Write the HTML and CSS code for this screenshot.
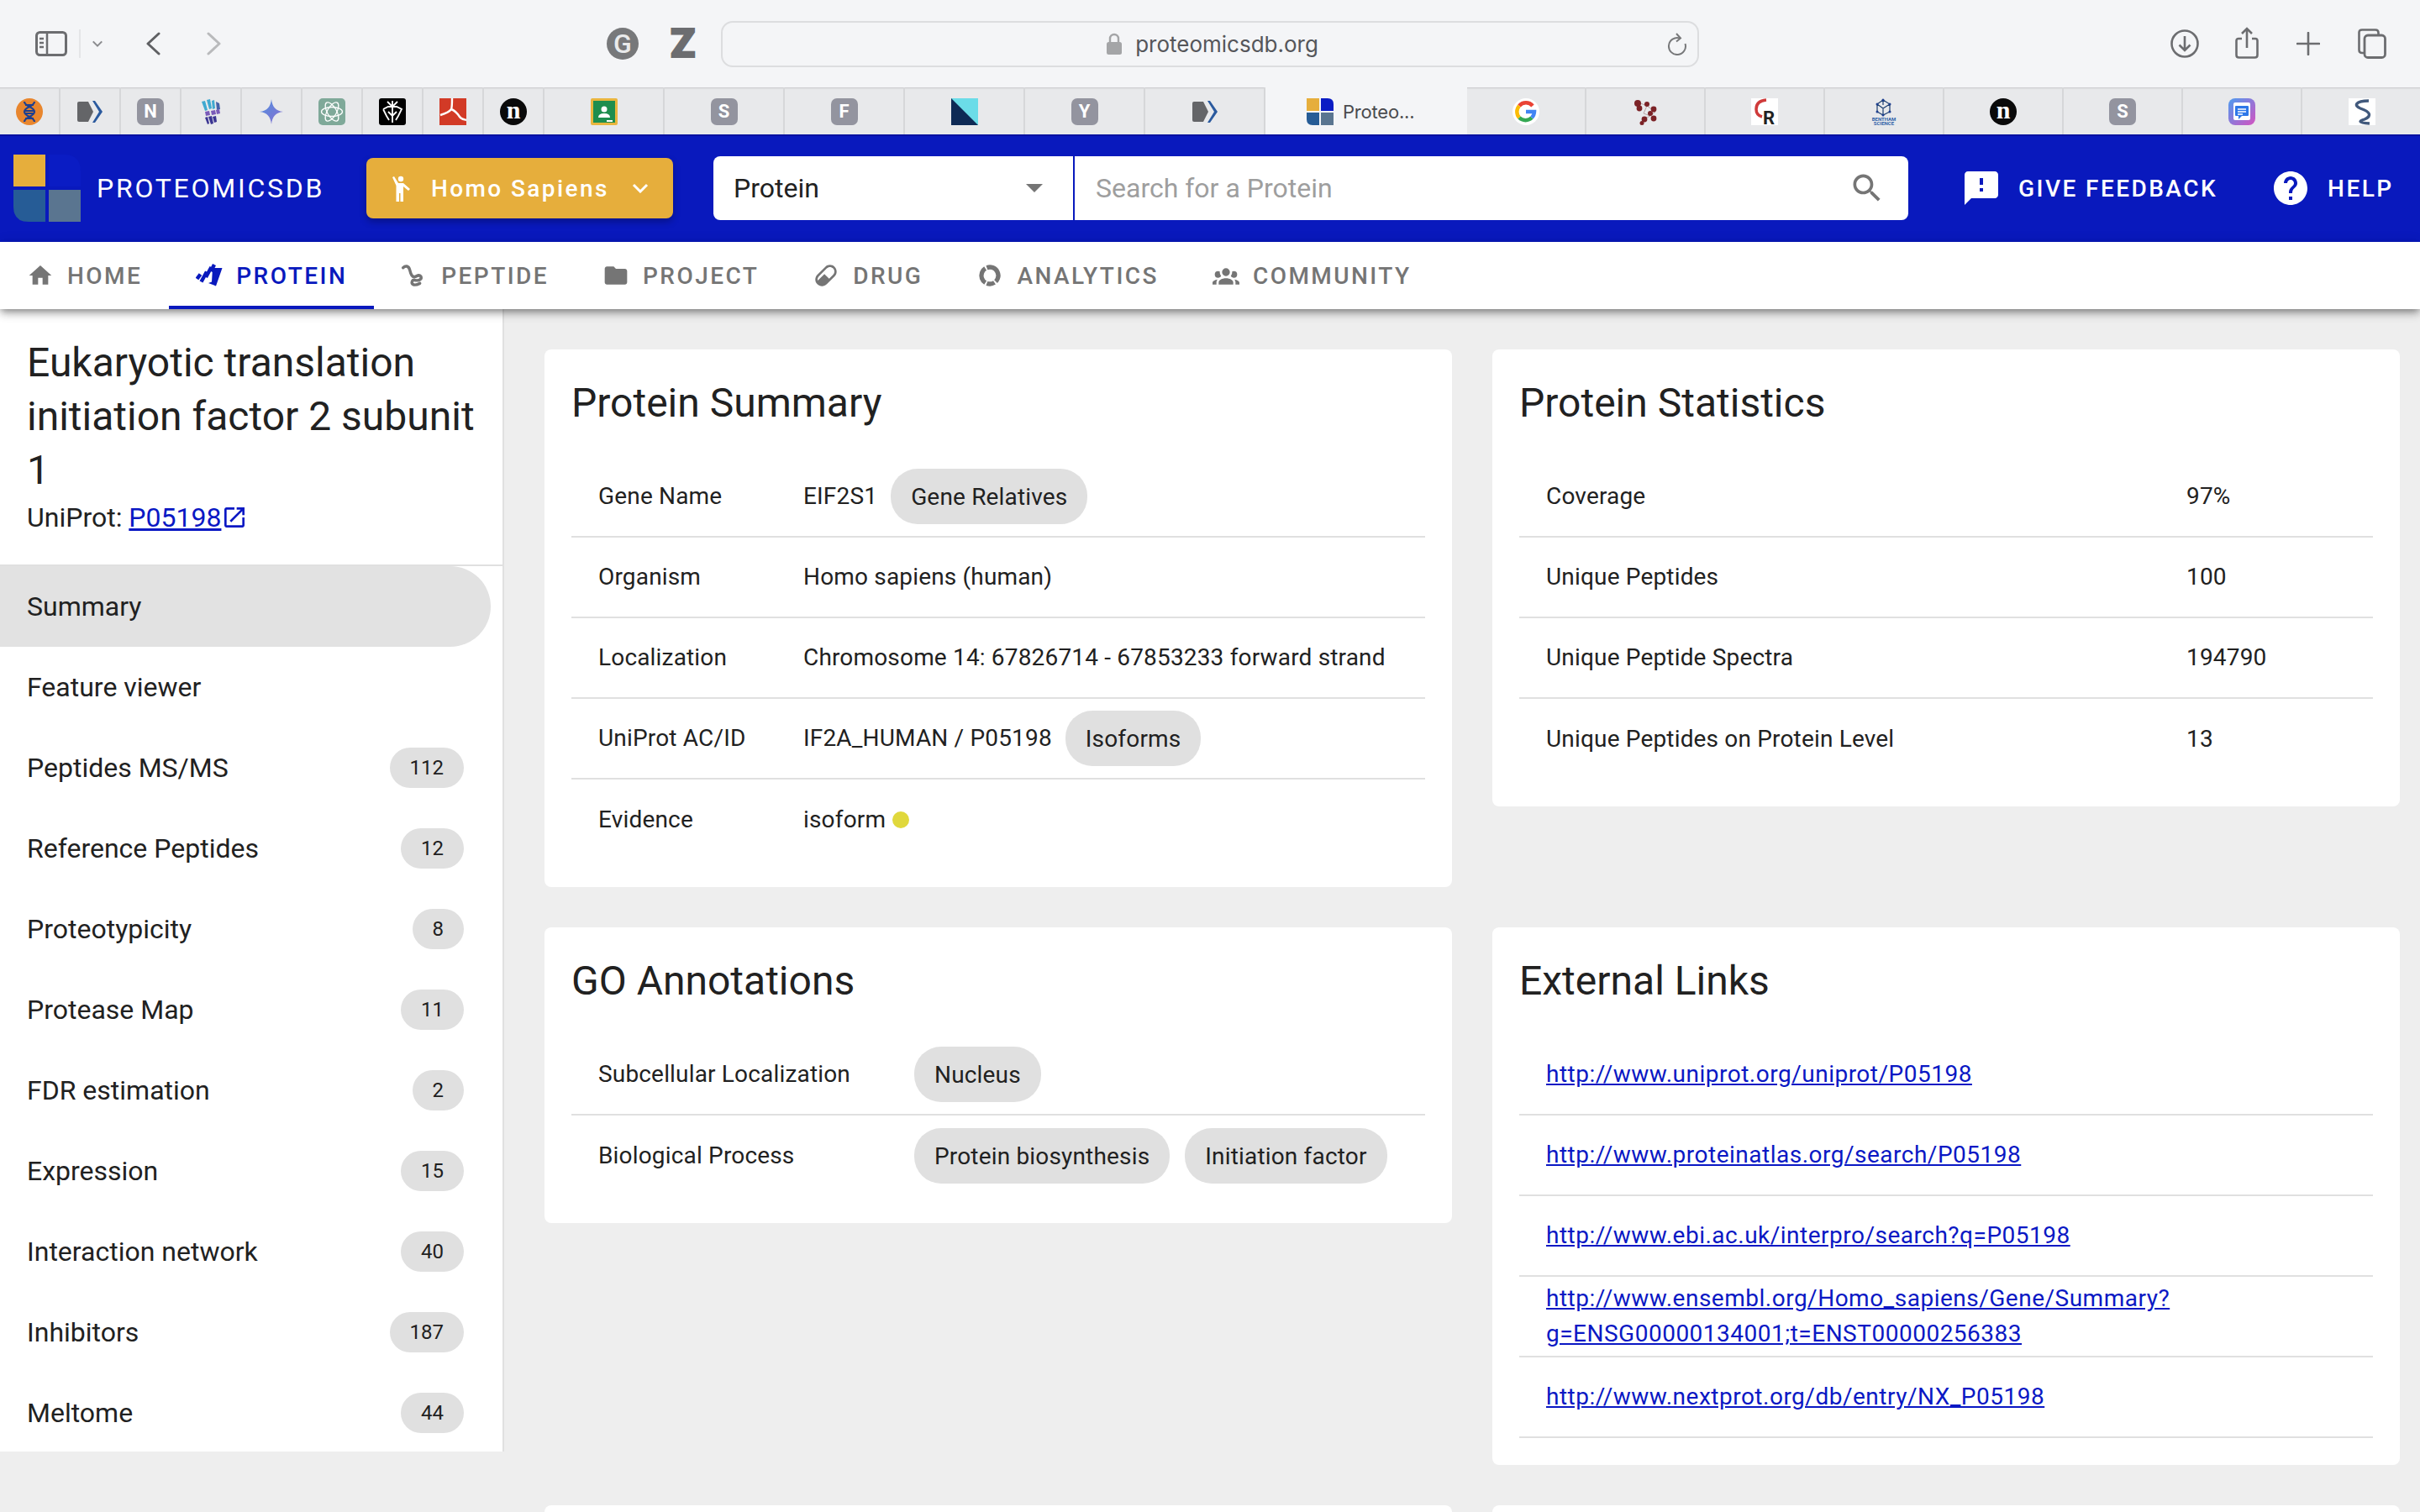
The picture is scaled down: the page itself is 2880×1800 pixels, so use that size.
FILE: index.html
```html
<!DOCTYPE html>
<html lang="en">
<head>
<meta charset="utf-8">
<title>ProteomicsDB</title>
<link rel="stylesheet" href="styles.css">
</head>
<body>
<svg class="defs" width="0" height="0">
  <symbol id="fav-arrow" viewBox="0 0 32 32"><path d="M1 6q0-2 2-2h11l6 12-6 12H3q-2 0-2-2z" fill="#646568"/><path d="M19 3h3l9 13-9 13h-3l8-13z" fill="#2b5a9e"/></symbol>
  <symbol id="logo-mark" viewBox="0 0 80 80"><rect width="38" height="38" fill="#e6ae3c"/><path d="M42 0h18q20 0 20 20v18H42z" fill="#0a1cc4"/><path d="M0 42h38v38H18Q0 80 0 62z" fill="#265c96"/><rect x="42" y="42" width="38" height="38" fill="#5a7590"/></symbol>
</svg>

<div class="toolbar">
  <svg class="tb-sidebar" viewBox="0 0 38 30"><rect x="1.500" y="1.500" width="35" height="27" rx="4" fill="none" stroke="#6c6d70" stroke-width="3"/><path d="M14 2v26" stroke="#6c6d70" stroke-width="2.500"/><path d="M5 9h5M5 14h5M5 19h5" stroke="#6c6d70" stroke-width="2.500"/></svg>
  <span class="tb-sep"></span>
  <svg class="tb-chev" viewBox="0 0 16 10"><path d="M2 2l6 6 6-6" fill="none" stroke="#8a8b8e" stroke-width="2.400"/></svg>
  <svg class="tb-back" viewBox="0 0 18 28"><path d="M16 2L3 14l13 12" fill="none" stroke="#5f6063" stroke-width="3" stroke-linecap="round" stroke-linejoin="round"/></svg>
  <svg class="tb-fwd" viewBox="0 0 18 28"><path d="M2 2l13 12L2 26" fill="none" stroke="#b9babc" stroke-width="3" stroke-linecap="round" stroke-linejoin="round"/></svg>
  <svg class="tb-gram" viewBox="0 0 38 38"><circle cx="19" cy="19" r="19" fill="#77787a"/><text x="19" y="30" text-anchor="middle" class="gram-g">G</text></svg>
  <span class="tb-z">Z</span>
  <div class="urlbar">
    <svg class="lock" viewBox="0 0 18 26"><path d="M4 12V7a5 5 0 0 1 10 0v5" fill="none" stroke="#a4a5a7" stroke-width="2.400"/><rect y="11" width="18" height="15" rx="2.500" fill="#a4a5a7"/></svg>
    <span class="url-text">proteomicsdb.org</span>
    <svg class="reload" viewBox="0 0 24 28"><path d="M15 7.500A10 10 0 1 0 21.500 14" fill="none" stroke="#77787a" stroke-width="2"/><path d="M11 2l5 5.500-5 4" fill="none" stroke="#77787a" stroke-width="2"/></svg>
  </div>
  <svg class="tb-dl" viewBox="0 0 34 34"><circle cx="17" cy="17" r="15.500" fill="none" stroke="#6c6d70" stroke-width="2.600"/><path d="M17 8v17M10.500 18.500l6.500 6.500 6.500-6.500" fill="none" stroke="#6c6d70" stroke-width="2.600"/></svg>
  <svg class="tb-share" viewBox="0 0 28 38"><path d="M8 14H4q-2.500 0-2.500 2.500v17q0 3 3 3h19q3 0 3-3v-17Q26.500 14 24 14h-4" fill="none" stroke="#6c6d70" stroke-width="2.600"/><path d="M14 25V2M8 8l6-6 6 6" fill="none" stroke="#6c6d70" stroke-width="2.600"/></svg>
  <svg class="tb-plus" viewBox="0 0 28 28"><path d="M14 1v26M1 14h26" stroke="#6c6d70" stroke-width="2.600" stroke-linecap="round"/></svg>
  <svg class="tb-tabs" viewBox="0 0 34 36"><path d="M7 29H5q-3.500 0-3.500-3.500v-21Q1.500 1.500 5 1.500h16q3.500 0 3.500 3.500v2" fill="none" stroke="#6c6d70" stroke-width="2.600"/><rect x="8" y="8" width="24.500" height="26.500" rx="4" fill="none" stroke="#6c6d70" stroke-width="2.800"/></svg>
</div>

<div class="tabstrip">
  <div class="tab"><svg class="fav" viewBox="0 0 32 32"><circle cx="16" cy="16" r="16" fill="#e8862e"/><path d="M10 4c0 6 12 6 12 12s-12 6-12 12M22 4c0 6-12 6-12 12s12 6 12 12M11 8h10M10 15h12M10 18h12M11 24h10" fill="none" stroke="#1d3f8f" stroke-width="2.200"/></svg></div>
  <div class="tab"><svg class="fav"><use href="#fav-arrow"/></svg></div>
  <div class="tab"><span class="fav-letter">N</span></div>
  <div class="tab"><svg class="fav" viewBox="0 0 32 32"><path d="M5 4l4-1 3 11-3 1zM11 2l4-1 2 11-3 1zM17 3l3-1 1 10-3 1z" fill="#3fa9d0"/><path d="M22 4l4 2 1 7-4 1z" fill="#4561a8"/><path d="M9 16l5-1 1 5-5 1zM16 15l5-1 1 5-5 1zM22 14l4-1 1 5-4 1z" fill="#7a5ab8"/><path d="M9 23l3 8 2-1-2-8zM13 22l3 9 3-1-2-9zM18 22l2 7 3-1-1-7z" fill="#3b3592"/></svg></div>
  <div class="tab"><svg class="fav" viewBox="0 0 32 32"><defs><linearGradient id="gem" x1="0" y1="0" x2="1" y2="1"><stop offset="0" stop-color="#4f8fe0"/><stop offset="1" stop-color="#8a6fd0"/></linearGradient></defs><path d="M16 1c1 9 5 14 14 15-9 1-13 6-14 15-1-9-5-14-14-15 9-1 13-6 14-15z" fill="url(#gem)"/></svg></div>
  <div class="tab"><svg class="fav" viewBox="0 0 32 32"><rect width="32" height="32" rx="5" fill="#7fa999"/><g fill="none" stroke="#fff" stroke-width="1.300"><ellipse cx="16" cy="16" rx="12.500" ry="5.500"/><ellipse cx="16" cy="16" rx="12.500" ry="5.500" transform="rotate(60 16 16)"/><ellipse cx="16" cy="16" rx="12.500" ry="5.500" transform="rotate(120 16 16)"/></g></svg></div>
  <div class="tab"><svg class="fav" viewBox="0 0 32 32"><rect width="32" height="32" rx="3" fill="#000"/><path d="M16 3v26M10 4l6 6 6-6M5 13l6-3h10l6 3-4 8-3 5M5 13l4 8 3 5M11 16l5 5 5-5" fill="none" stroke="#fff" stroke-width="1.800"/></svg></div>
  <div class="tab"><svg class="fav" viewBox="0 0 32 32"><rect width="32" height="32" fill="#d23a26"/><path d="M15 0c0 8 0 11-1 13-2 3-6 5-13 7M14 13c3 1 6 3 10 9 2 3 5 3 8 4" fill="none" stroke="#fff" stroke-width="2.400"/></svg></div>
  <div class="tab"><span class="fav-n">n</span></div>
  <div class="tab tab-wide"><svg class="fav" viewBox="0 0 32 32"><rect width="32" height="32" rx="2" fill="#e9b63e"/><rect x="3" y="3" width="26" height="26" fill="#1e8e4e"/><circle cx="16" cy="13" r="3.500" fill="#fff"/><path d="M9 23q0-5 7-5t7 5z" fill="#fff"/><rect x="19" y="26" width="7" height="2" fill="#fff"/></svg></div>
  <div class="tab tab-wide"><span class="fav-letter">S</span></div>
  <div class="tab tab-wide"><span class="fav-letter">F</span></div>
  <div class="tab tab-wide"><svg class="fav" viewBox="0 0 32 32"><rect width="32" height="32" fill="#0e2a55"/><path d="M0 0h32v32z" fill="#6bdce8"/></svg></div>
  <div class="tab tab-wide"><span class="fav-letter">Y</span></div>
  <div class="tab tab-wide"><svg class="fav"><use href="#fav-arrow"/></svg></div>
  <div class="tab tab-active"><svg class="fav fav-act" viewBox="0 0 32 32"><rect width="15" height="15" fill="#e6ae3c"/><path d="M17 0h8q7 0 7 7v8H17z" fill="#0a1cc4"/><path d="M0 17h15v15H7q-7 0-7-7z" fill="#265c96"/><rect x="17" y="17" width="15" height="15" fill="#5a7590"/></svg><span class="tab-title">Proteo...</span></div>
  <div class="tab tab-narrow"><svg class="fav" viewBox="0 0 32 32"><circle cx="16" cy="16" r="16" fill="#fff"/><g fill="none" stroke-width="4.500"><path d="M24 9A10.500 10.500 0 0 0 8 9" stroke="#ea4335"/><path d="M8 9a10.500 10.500 0 0 0 0 14" stroke="#fbbc05"/><path d="M8 23a10.500 10.500 0 0 0 15 0" stroke="#34a853"/><path d="M23 23a10.500 10.500 0 0 0 3-7H16" stroke="#4285f4"/></g></svg></div>
  <div class="tab tab-narrow"><svg class="fav" viewBox="0 0 32 32"><path d="M8 5l10 4 10 7-6 5-10 5M18 9l-4 9 8 3" stroke="#b9a3a3" fill="none"/><g fill="#7b2226"><circle cx="7" cy="6" r="4"/><circle cx="9" cy="12" r="3.400"/><circle cx="18" cy="7" r="3"/><circle cx="26" cy="13" r="3.400"/><circle cx="22" cy="18" r="3"/><circle cx="26" cy="24" r="3.400"/><circle cx="15" cy="25" r="3.400"/><circle cx="12" cy="29.500" r="2.500"/></g></svg></div>
  <div class="tab tab-narrow"><svg class="fav fav-ov" viewBox="0 0 32 32"><rect width="32" height="32" fill="#fff"/><path d="M18 2Q6 3 6 13q0 7 7 9" fill="none" stroke="#cf3a3a" stroke-width="3.500"/><text x="21" y="31" text-anchor="middle" class="fav-cr">R</text></svg></div>
  <div class="tab tab-narrow"><svg class="fav fav-ov" viewBox="0 0 32 32"><path d="M15 2l8 5v9l-8 4-7-4V7zM15 2v6M8 7l7 5 8-5M15 12v8" fill="none" stroke="#1d3f6f" stroke-width="1.200"/><g fill="#1d3f8f"><circle cx="15" cy="2" r="1.500"/><circle cx="23" cy="7" r="1.500"/><circle cx="23" cy="16" r="1.500"/><circle cx="15" cy="20" r="1.500"/><circle cx="8" cy="16" r="1.500"/><circle cx="8" cy="7" r="1.500"/></g><text x="16" y="26.500" text-anchor="middle" class="fav-ben">BENTHAM</text><text x="16" y="32" text-anchor="middle" class="fav-ben">SCIENCE</text></svg></div>
  <div class="tab tab-narrow"><span class="fav-n">n</span></div>
  <div class="tab tab-narrow"><span class="fav-letter">S</span></div>
  <div class="tab tab-narrow"><svg class="fav" viewBox="0 0 32 32"><defs><linearGradient id="msg" x1="0" y1="0" x2="1" y2="1"><stop offset="0" stop-color="#4d9cf0"/><stop offset="1" stop-color="#d452c0"/></linearGradient></defs><rect width="32" height="32" rx="8" fill="url(#msg)"/><rect x="6" y="5" width="20" height="21" rx="2" fill="#fff"/><path d="M9 9h14a1 1 0 0 1 1 1v10a1 1 0 0 1-1 1h-7l-4 4v-4H9a1 1 0 0 1-1-1V10a1 1 0 0 1 1-1z" fill="#2e77e8"/><path d="M11 13h10M11 16h10M11 19h6" stroke="#fff" stroke-width="1.500"/></svg></div>
  <div class="tab tab-narrow tab-last"><svg class="fav" viewBox="0 0 32 32"><rect width="32" height="32" fill="#fff"/><path d="M24 3C8 3 6 9 14 12c12 4 14 9 5 13-6 2-9 4 6 5" fill="none" stroke="#41597c" stroke-width="3.400"/></svg></div>
</div>

<header class="appbar">
  <svg class="logo"><use href="#logo-mark"/></svg>
  <span class="brand">PROTEOMICSDB</span>
  <button class="species">
    <svg class="species-icon" viewBox="0 0 28 32"><circle cx="12" cy="5" r="3.200" fill="#fff"/><path d="M2 3l2-1 5 8h6l8 7-2 2-6-5v18h-3.500V22h-1.500v10H6.500V13z" fill="#fff"/></svg>
    <span class="species-label">Homo Sapiens</span>
    <svg class="species-chev" viewBox="0 0 20 12"><path d="M2 2l8 8 8-8" fill="none" stroke="#fff" stroke-width="3"/></svg>
  </button>
  <div class="search">
    <div class="search-type"><span>Protein</span><i class="tri"></i></div>
    <div class="search-input"><span>Search for a Protein</span>
      <svg class="search-icon" viewBox="0 0 24 24"><path d="M15.500 14h-.79l-.28-.27C15.410 12.590 16 11.110 16 9.500 16 5.910 13.090 3 9.500 3S3 5.910 3 9.500 5.910 16 9.500 16c1.610 0 3.090-.59 4.230-1.570l.27.28v.79l5 4.990L20.490 19l-4.990-5zm-6 0C7.010 14 5 11.990 5 9.500S7.010 5 9.500 5 14 7.010 14 9.500 11.990 14 9.500 14z"/></svg>
    </div>
  </div>
  <div class="app-action action-feedback">
    <svg class="app-icon" viewBox="0 0 24 24"><path d="M20 2H4c-1.100 0-1.990.9-1.990 2L2 22l4-4h14c1.100 0 2-.9 2-2V4c0-1.100-.9-2-2-2zm-7 12h-2v-2h2v2zm0-4h-2V6h2v4z"/></svg>
    <span>GIVE FEEDBACK</span>
  </div>
  <div class="app-action action-help">
    <svg class="app-icon" viewBox="0 0 24 24"><path d="M12 2C6.480 2 2 6.480 2 12s4.480 10 10 10 10-4.480 10-10S17.520 2 12 2zm1 17h-2v-2h2v2zm2.070-7.750l-.9.92C13.450 12.900 13 13.500 13 15h-2v-.5c0-1.100.45-2.100 1.170-2.830l1.240-1.260c.37-.36.59-.86.59-1.410 0-1.100-.9-2-2-2s-2 .9-2 2H8c0-2.210 1.790-4 4-4s4 1.790 4 4c0 .88-.36 1.680-.93 2.250z"/></svg>
    <span>HELP</span>
  </div>
</header>

<nav class="tabs">
  <a class="navtab">
    <svg class="nav-icon" viewBox="0 0 24 24"><path d="M10 20v-6h4v6h5v-8h3L12 3 2 12h3v8z"/></svg><span>HOME</span></a>
  <a class="navtab navtab-active">
    <svg class="nav-icon" viewBox="0 0 32 32"><path d="M20 7l11.500 0-7.500 21.500-9-3.500 4-1.500z"/><path d="M1.500 20l4-5.500M6.500 23.500l6.500-12M12 18l6.500-12M18 11l4-8" fill="none" stroke="#0919bd" stroke-width="4.400"/></svg><span>PROTEIN</span></a>
  <a class="navtab">
    <svg class="nav-icon" viewBox="0 0 24 24"><path d="M2 5c2-2 5-2 6 2s2 7 5 6c2-1 4-2 5 0 1 3-3 4-6 3-2 0-3 3-1 4s4 0 6-1" fill="none" stroke="#757575" stroke-width="2.600" stroke-linecap="round"/></svg><span>PEPTIDE</span></a>
  <a class="navtab">
    <svg class="nav-icon" viewBox="0 0 24 24"><path d="M10 4H4c-1.100 0-1.990.9-1.990 2L2 18c0 1.100.9 2 2 2h16c1.100 0 2-.9 2-2V8c0-1.100-.9-2-2-2h-8l-2-2z"/></svg><span>PROJECT</span></a>
  <a class="navtab">
    <svg class="nav-icon" viewBox="0 0 24 24"><path d="M4.220 11.290L11.290 4.220C13.640 1.880 17.430 1.880 19.780 4.220C22.120 6.560 22.120 10.360 19.780 12.710L12.710 19.780C10.360 22.120 6.560 22.120 4.220 19.780C1.880 17.430 1.880 13.640 4.220 11.290M5.640 12.710C4.590 13.750 4.260 15.240 4.640 16.570L10.590 10.630L14.830 14.870L18.360 11.290C19.930 9.730 19.930 7.200 18.360 5.640C16.800 4.070 14.270 4.070 12.710 5.640L5.640 12.710Z"/></svg><span>DRUG</span></a>
  <a class="navtab">
    <svg class="nav-icon" viewBox="0 0 24 24"><circle cx="12" cy="12" r="7.500" fill="none" stroke="#757575" stroke-width="4" stroke-dasharray="15 1.500 7 1.500 15 1.500 6 1.100" transform="rotate(-70 12 12)"/></svg><span>ANALYTICS</span></a>
  <a class="navtab">
    <svg class="nav-icon" viewBox="0 0 24 24"><path d="M12 5.500A3.500 3.500 0 0 1 15.500 9 3.500 3.500 0 0 1 12 12.500 3.500 3.500 0 0 1 8.500 9 3.500 3.500 0 0 1 12 5.500M5 8c.56 0 1.080.15 1.530.42-.15 1.430.27 2.850 1.130 3.960C7.160 13.340 6.160 14 5 14a3 3 0 0 1-3-3 3 3 0 0 1 3-3m14 0a3 3 0 0 1 3 3 3 3 0 0 1-3 3c-1.160 0-2.160-.66-2.660-1.620.86-1.110 1.280-2.530 1.130-3.960.45-.27.97-.42 1.530-.42M5.500 18.250c0-2.070 2.910-3.750 6.500-3.750s6.500 1.680 6.500 3.750V20h-13v-1.750M0 20v-1.500c0-1.390 1.890-2.560 4.450-2.900-.59.68-.95 1.620-.95 2.650V20H0m24 0h-3.500v-1.750c0-1.030-.36-1.970-.95-2.650 2.560.34 4.450 1.510 4.450 2.900V20z"/></svg><span>COMMUNITY</span></a>
</nav>

<div class="page">
  <aside class="sidebar">
    <div class="side-head">
      <h1 class="side-title">Eukaryotic translation initiation factor 2 subunit 1</h1>
      <div class="side-sub">UniProt: <a class="link">P05198</a><svg class="ext" viewBox="0 0 24 24"><path d="M19 19H5V5h7V3H5c-1.110 0-2 .9-2 2v14c0 1.100.89 2 2 2h14c1.100 0 2-.9 2-2v-7h-2v7zM14 3v2h3.590l-9.830 9.830 1.410 1.410L19 6.410V10h2V3h-7z"/></svg></div>
    </div>
    <ul class="side-list">
      <li class="side-item side-active">Summary</li>
      <li class="side-item">Feature viewer</li>
      <li class="side-item">Peptides MS/MS<span class="badge">112</span></li>
      <li class="side-item">Reference Peptides<span class="badge">12</span></li>
      <li class="side-item">Proteotypicity<span class="badge">8</span></li>
      <li class="side-item">Protease Map<span class="badge">11</span></li>
      <li class="side-item">FDR estimation<span class="badge">2</span></li>
      <li class="side-item">Expression<span class="badge">15</span></li>
      <li class="side-item">Interaction network<span class="badge">40</span></li>
      <li class="side-item">Inhibitors<span class="badge">187</span></li>
      <li class="side-item">Meltome<span class="badge">44</span></li>
    </ul>
  </aside>

  <main class="content">
    <section class="card">
      <h2 class="card-title">Protein Summary</h2>
      <div class="row row-summary"><div class="cell">Gene Name</div><div class="cell val">EIF2S1<span class="chip chip-after">Gene Relatives</span></div></div>
      <div class="row row-summary"><div class="cell">Organism</div><div class="cell val">Homo sapiens (human)</div></div>
      <div class="row row-summary"><div class="cell">Localization</div><div class="cell val">Chromosome 14: 67826714 - 67853233 forward strand</div></div>
      <div class="row row-summary"><div class="cell">UniProt AC/ID</div><div class="cell val">IF2A_HUMAN / P05198<span class="chip chip-after">Isoforms</span></div></div>
      <div class="row row-summary row-last"><div class="cell">Evidence</div><div class="cell val">isoform<i class="dot"></i></div></div>
    </section>

    <section class="card">
      <h2 class="card-title">Protein Statistics</h2>
      <div class="row row-stats"><div class="cell">Coverage</div><div class="cell val">97%</div></div>
      <div class="row row-stats"><div class="cell">Unique Peptides</div><div class="cell val">100</div></div>
      <div class="row row-stats"><div class="cell">Unique Peptide Spectra</div><div class="cell val">194790</div></div>
      <div class="row row-stats row-last"><div class="cell">Unique Peptides on Protein Level</div><div class="cell val">13</div></div>
    </section>

    <section class="card">
      <h2 class="card-title">GO Annotations</h2>
      <div class="row row-go"><div class="cell">Subcellular Localization</div><div class="cell chips"><span class="chip">Nucleus</span></div></div>
      <div class="row row-go row-last"><div class="cell">Biological Process</div><div class="cell chips"><span class="chip">Protein biosynthesis</span><span class="chip">Initiation factor</span></div></div>
    </section>

    <section class="card">
      <h2 class="card-title">External Links</h2>
      <div class="row row-link"><div class="cell"><a class="link">http://www.uniprot.org/uniprot/P05198</a></div></div>
      <div class="row row-link"><div class="cell"><a class="link">http://www.proteinatlas.org/search/P05198</a></div></div>
      <div class="row row-link"><div class="cell"><a class="link">http://www.ebi.ac.uk/interpro/search?q=P05198</a></div></div>
      <div class="row row-link"><div class="cell link-wrap"><a class="link">http://www.ensembl.org/Homo_sapiens/Gene/Summary?<br>g=ENSG00000134001;t=ENST00000256383</a></div></div>
      <div class="row row-link"><div class="cell"><a class="link">http://www.nextprot.org/db/entry/NX_P05198</a></div></div>
    </section>

    <section class="card card-next"></section>
    <section class="card card-next"></section>
  </main>
</div>
</body>
</html>
```

FILE: styles.css
```css
* { box-sizing: border-box; }
html, body { margin: 0; padding: 0; }
body {
  width: 2880px;
  height: 1800px;
  overflow: hidden;
  background: #eeeeee;
  font-family: Roboto, "Liberation Sans", sans-serif;
  color: #212121;
}
.defs { position: absolute; }

/* browser toolbar */
.toolbar {
  display: flex;
  align-items: center;
  height: 104px;
  background: #f4f5f7;
}
.toolbar > svg { display: block; flex: none; }
.tb-sidebar { width: 38px; height: 30px; margin-left: 42px; }
.tb-sep { width: 2px; height: 34px; background: #e4e5e7; margin-left: 14px; }
.tb-chev { width: 14px; height: 10px; margin-left: 13px; }
.tb-back { width: 18px; height: 28px; margin-left: 50px; }
.tb-fwd { width: 18px; height: 28px; margin-left: 55px; }
.tb-gram { width: 38px; height: 38px; margin-left: 458px; }
.gram-g { font: 500 32px Roboto, sans-serif; fill: #e9eaeb; }
.tb-z {
  width: 28px;
  margin-left: 38px;
  font: 900 48px/38px Roboto, sans-serif;
  color: #6c6d70;
  -webkit-text-stroke: 2px #6c6d70;
  text-align: center;
}
.urlbar {
  position: relative;
  display: flex;
  align-items: center;
  justify-content: center;
  width: 1164px;
  height: 55px;
  margin-left: 32px;
  border: 2px solid #dcdddf;
  border-radius: 14px;
  padding-left: 6px;
}
.lock { width: 18px; height: 26px; margin-right: 16px; }
.url-text { font: 400 26px Inter, sans-serif; color: #55565a; }
.reload { position: absolute; right: 12px; top: 11px; width: 24px; height: 28px; }
.tb-dl { width: 34px; height: 34px; margin-left: 561px; }
.tb-share { width: 28px; height: 38px; margin-left: 43px; margin-top: -2px; }
.tb-plus { width: 28px; height: 28px; margin-left: 45px; }
.tb-tabs { width: 34px; height: 36px; margin-left: 45px; }

/* browser tab strip */
.tabstrip {
  display: flex;
  height: 56px;
  background: #e8e9eb;
  box-shadow: inset 0 3px 2px -2px #c6c7c9;
}
.tab {
  display: flex;
  align-items: center;
  justify-content: center;
  flex: none;
  width: 72px;
  padding-top: 2px;
  border-right: 2px solid #d6d7d9;
}
.tab-wide { width: 143px; }
.tab-active {
  width: 240px;
  justify-content: flex-start;
  padding-left: 49px;
  background: #f4f5f7;
  border-right: 0;
}
.tab-narrow { width: 142px; }
.tab-last { width: 141px; border-right: 0; }
.fav { display: block; width: 32px; height: 32px; flex: none; }
.fav-ov { overflow: visible; }
.fav-act { margin-right: 11px; }
.tab-title { font: 400 22px Inter, sans-serif; letter-spacing: -.2px; color: #4a4b4e; }
.fav-letter {
  width: 32px;
  height: 32px;
  border-radius: 7px;
  background: #93949f;
  color: #fff;
  font: 700 22px/32px Roboto, sans-serif;
  text-align: center;
}
.fav-n {
  width: 32px;
  height: 32px;
  border-radius: 50%;
  background: #0a0a0a;
  color: #fff;
  font: 700 30px/27px "Liberation Serif", serif;
  text-align: center;
}
.fav-cr { font: 700 22px Roboto, sans-serif; fill: #222; }
.fav-ben { font: 700 6px Roboto, sans-serif; fill: #2f62a8; }

/* application bar */
.appbar {
  display: flex;
  align-items: center;
  height: 128px;
  padding-bottom: 2px;
  background: #0919bd;
  border-top: 2px solid #0310a0;
  color: #fff;
}
.logo { width: 80px; height: 80px; margin-left: 16px; flex: none; }
.brand {
  width: 321px;
  margin-left: 19px;
  font-size: 32px;
  font-weight: 400;
  letter-spacing: 2.75px;
}
.species {
  display: flex;
  align-items: center;
  width: 365px;
  height: 72px;
  padding: 0 0 0 29px;
  border: 0;
  border-radius: 8px;
  background: #e6ae3c;
  color: #fff;
  box-shadow: 0 4px 8px rgba(0, 0, 0, .28);
  font-family: inherit;
}
.species-icon { width: 28px; height: 32px; flex: none; fill: #fff; }
.species-label {
  margin-left: 20px;
  font-size: 28px;
  font-weight: 500;
  letter-spacing: 2.4px;
}
.species-chev { width: 20px; height: 12px; margin-left: 27px; }
.search {
  display: flex;
  width: 1422px;
  height: 76px;
  margin-left: 48px;
  border-radius: 8px;
  background: #fff;
  overflow: hidden;
}
.search-type {
  display: flex;
  align-items: center;
  justify-content: space-between;
  width: 430px;
  padding: 0 36px 0 24px;
  border-right: 2px solid #0919bd;
  color: #212121;
  font-size: 32px;
}
.tri {
  width: 0;
  height: 0;
  border-left: 10px solid transparent;
  border-right: 10px solid transparent;
  border-top: 10px solid #757575;
}
.search-input {
  display: flex;
  align-items: center;
  justify-content: space-between;
  flex: 1;
  padding: 0 27px 0 25px;
  color: #9e9e9e;
  font-size: 32px;
}
.search-icon { width: 44px; height: 44px; fill: #757575; }
.app-action {
  display: flex;
  align-items: center;
  font-size: 28px;
  font-weight: 500;
  letter-spacing: 2.45px;
}
.app-action span { margin-left: 20px; }
.app-icon { width: 48px; height: 48px; fill: #fff; flex: none; }
.action-feedback { margin-left: 63px; }
.action-help { margin-left: 63px; }

/* navigation tabs */
.tabs {
  position: relative;
  z-index: 2;
  display: flex;
  height: 80px;
  background: #fff;
  box-shadow: 0 4px 8px -2px rgba(0, 0, 0, .35), 0 6px 10px rgba(0, 0, 0, .14), 0 2px 16px rgba(0, 0, 0, .12);
}
.navtab {
  display: flex;
  align-items: center;
  gap: 16px;
  padding: 0 32px;
  color: #757575;
  font-size: 28px;
  font-weight: 500;
  letter-spacing: 2.45px;
}
.nav-icon { width: 32px; height: 32px; fill: #757575; flex: none; }
.navtab-active { color: #0919bd; border-bottom: 4px solid #0919bd; padding-top: 4px; }
.navtab-active .nav-icon { fill: #0919bd; }

/* page */
.page { display: flex; align-items: flex-start; }
.sidebar {
  flex: none;
  width: 600px;
  height: 1360px;
  background: #fff;
  border-right: 2px solid #e0e0e0;
}
.side-head {
  height: 306px;
  padding: 32px 24px 0 32px;
  border-bottom: 2px solid #e0e0e0;
}
.side-title {
  margin: 0;
  font-size: 48px;
  line-height: 64px;
  font-weight: 400;
}
.side-sub { display: flex; align-items: center; font-size: 32px; line-height: 48px; white-space: pre; }
.link { color: #0a18c4; text-decoration: underline; }
.ext { width: 32px; height: 32px; fill: #0a18c4; flex: none; }
.side-list { list-style: none; margin: 0; padding: 0; }
.side-item {
  display: flex;
  align-items: center;
  justify-content: space-between;
  height: 96px;
  padding: 0 46px 0 32px;
  font-size: 32px;
}
.side-active {
  width: 584px;
  background: #e2e2e2;
  border-radius: 0 48px 48px 0;
}
.badge {
  height: 48px;
  padding: 0 24px;
  border-radius: 24px;
  background: #e0e0e0;
  font-size: 24px;
  line-height: 48px;
}

.content {
  display: grid;
  grid-template-columns: 1080px 1080px;
  align-items: start;
  gap: 48px;
  padding: 48px 0 0 48px;
}
.card {
  padding: 32px;
  border-radius: 8px;
  background: #fff;
}
.card-next { height: 8px; border-radius: 8px 8px 0 0; padding: 0; }
.card-title {
  margin: 0 0 32px;
  font-size: 48px;
  line-height: 64px;
  font-weight: 400;
}
.row {
  display: grid;
  align-items: center;
  height: 96px;
  border-bottom: 2px solid #e0e0e0;
  font-size: 28px;
  letter-spacing: .17px;
}
.row-last { border-bottom: 0; }
.row-summary { grid-template-columns: 244px 1fr; }
.row-stats { grid-template-columns: 762px 1fr; }
.row-go { grid-template-columns: 376px 1fr; }
.row-link { grid-template-columns: 1fr; line-height: 42px; letter-spacing: .5px; }
.cell { padding: 0 0 2px 32px; display: flex; align-items: center; }
.row-link .cell { padding-bottom: 0; }
.link-wrap { display: block; }
.chip {
  display: inline-flex;
  align-items: center;
  height: 66px;
  margin-top: 2px;
  padding: 2px 24px 0;
  border-radius: 32px;
  background: #e0e0e0;
  line-height: 64px;
}
.chip-after { margin-left: 16px; }
.chips { gap: 18px; }
.dot {
  width: 20px;
  height: 20px;
  margin: 2px 0 0 8px;
  border-radius: 50%;
  background: #e0d83c;
}
```
